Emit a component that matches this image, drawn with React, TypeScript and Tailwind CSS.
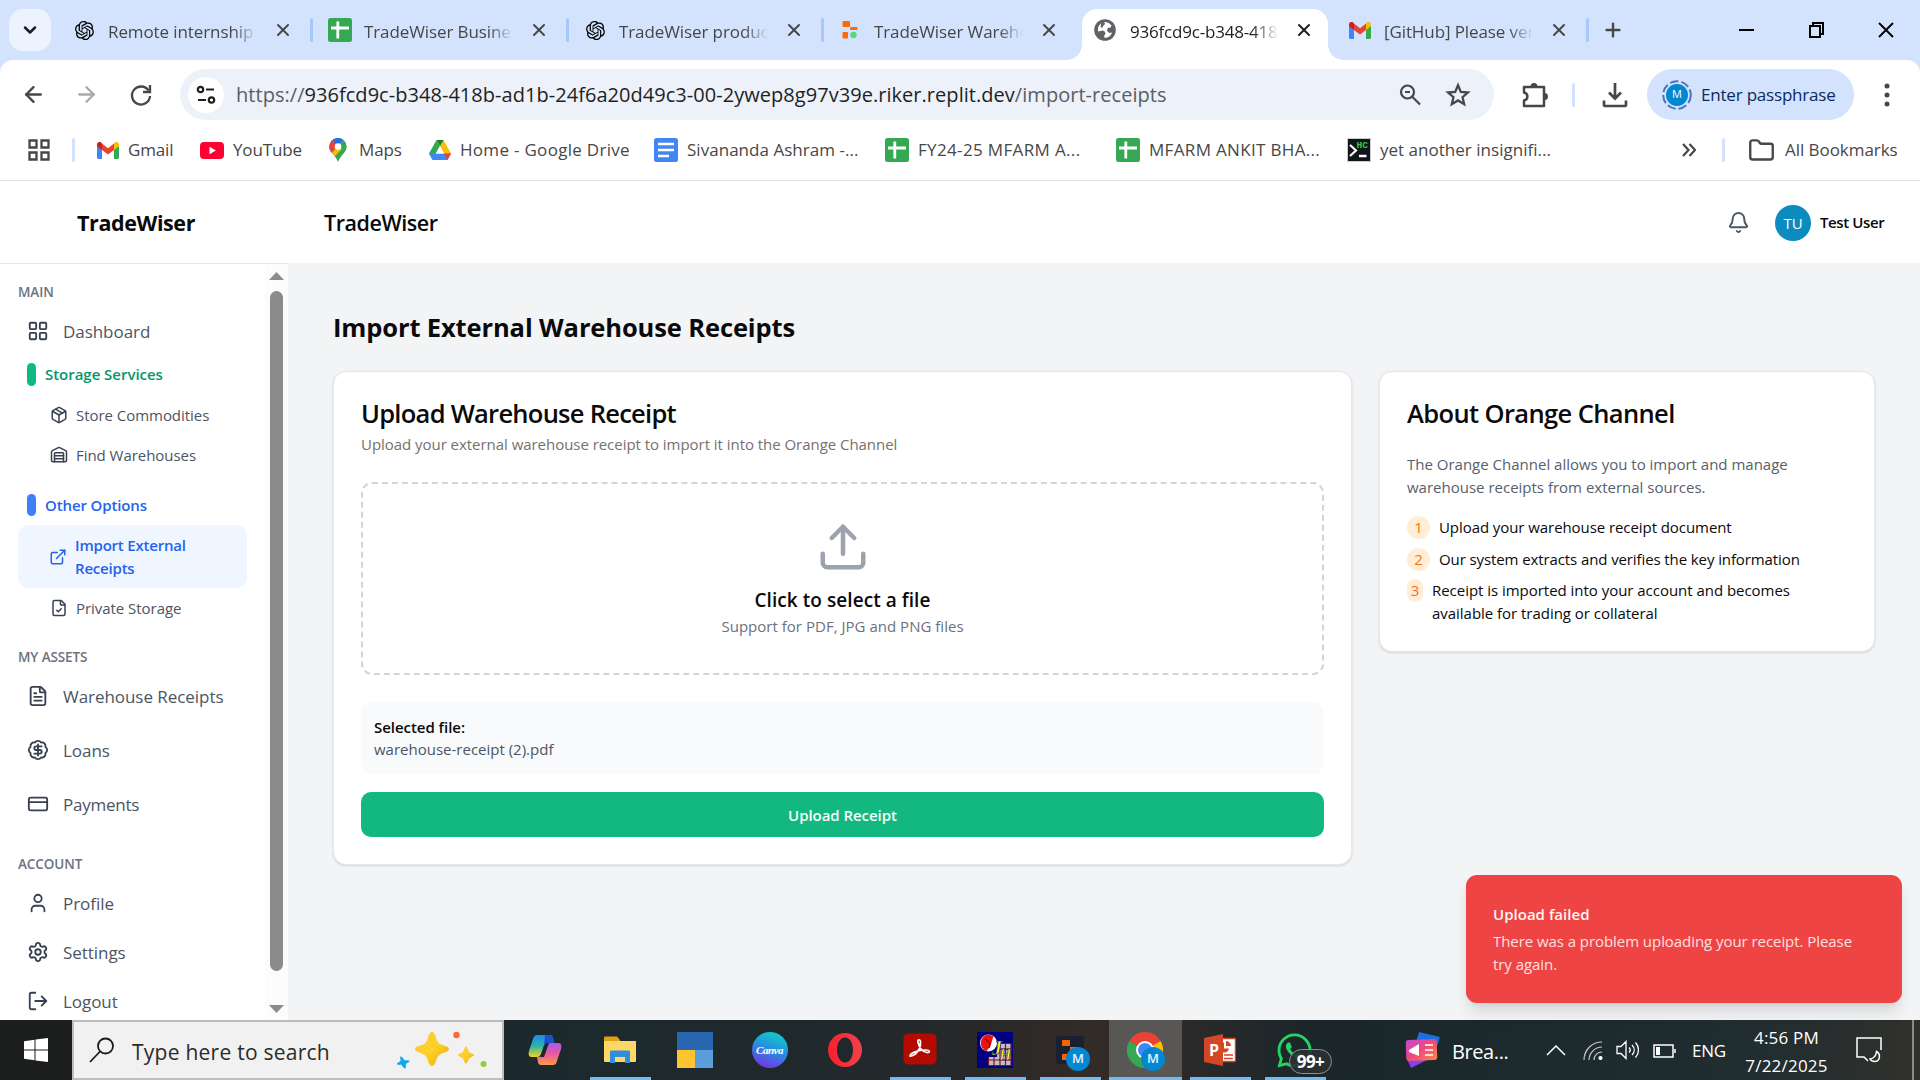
import React from "react";
import {
  ArrowLeft, ArrowRight, BadgeDollarSign, Bell, ChevronDown, CreditCard, ExternalLink, FileCheck, FileText,
  Folder, LayoutGrid, LogOut, Package, Plus, Settings, Upload, User, Warehouse, X,
} from "lucide-react";
import { RiOpenaiFill } from "react-icons/ri";
import { FaWhatsapp } from "react-icons/fa";

/* ---------- brand marks ---------- */

function SheetsIcon() {
  return (
    <svg width="24" height="24" viewBox="0 0 24 24">
      <rect width="24" height="24" rx="2.5" fill="#34a853" />
      <path d="M9.8 3.5v17M3 10h18" stroke="#fff" strokeWidth="2.8" />
    </svg>
  );
}

function DocsIcon() {
  return (
    <svg width="24" height="24" viewBox="0 0 24 24">
      <rect width="24" height="24" rx="2.5" fill="#4285f4" />
      <path d="M4 6h16M4 12h16M4 18h11" stroke="#fff" strokeWidth="2.4" />
    </svg>
  );
}

function GmailIcon() {
  return (
    <svg width="22" height="17" viewBox="0 0 22 17">
      <path d="M0 3v12.5C0 16.3.7 17 1.5 17H5V7.5z" fill="#4285f4" />
      <path d="M22 3v12.5c0 .8-.7 1.5-1.5 1.5H17V7.5z" fill="#34a853" />
      <path d="M17 1.6V8l5-3.800V2.500C22 .3 19.500-.9 17.800.5z" fill="#fbbc04" />
      <path d="M5 8V1.600l6 4.600 6-4.600V8l-6 4.600z" fill="#ea4335" />
      <path d="M0 2.500v1.700L5 8V1.600L4.200.5C2.500-.9 0 .3 0 2.500z" fill="#c5221f" />
    </svg>
  );
}

function YouTubeIcon() {
  return (
    <svg width="24" height="17" viewBox="0 0 24 17">
      <rect width="24" height="17" rx="4" fill="#ff0033" />
      <path d="M9.500 4.800v7.400l6.300-3.700z" fill="#fff" />
    </svg>
  );
}

function MapsIcon() {
  return (
    <svg width="18" height="24" viewBox="0 0 18 24">
      <defs>
        <clipPath id="pin">
          <path d="M9 0a8.700 8.700 0 0 0-8.700 8.700c0 3 1.500 4.700 3.400 7.100C5.700 18.300 7.700 20.500 9 24c1.300-3.500 3.300-5.700 5.300-8.200 1.900-2.400 3.400-4.100 3.400-7.100A8.700 8.700 0 0 0 9 0z" />
        </clipPath>
      </defs>
      <g clipPath="url(#pin)">
        <rect width="18" height="24" fill="#34a853" />
        <path d="M0 18L18 -2V-4H0z" fill="#4285f4" />
        <path d="M0 0h4l5 8-9 8z" fill="#ea4335" />
        <path d="M1 17L9 8l4 3-9 9z" fill="#fbbc04" />
        <path d="M3 1L9-1l5 2-6 7z" fill="#1a73e8" />
      </g>
      <circle cx="9" cy="8.600" r="3.300" fill="#fff" />
    </svg>
  );
}

function DriveIcon() {
  return (
    <svg width="22" height="20" viewBox="0 0 22 20">
      <path d="M7.500 0L0 13.500 3.700 19 11 6z" fill="#34a853" />
      <path d="M14.500 0L22 13.500h-7L7.500 0z" fill="#fbbc04" />
      <path d="M7.500 0L11 6l3.500-6z" fill="#188038" />
      <path d="M0 13.500h22L18.500 20h-15z" fill="#4285f4" />
      <path d="M15 13.500h7L18.500 20z" fill="#ea4335" />
      <path d="M11 6.200l-4.100 7.300h8.200z" fill="#fff" />
    </svg>
  );
}

function TerminalIcon() {
  return (
    <svg width="24" height="24" viewBox="0 0 24 24">
      <rect x=".5" y=".5" width="23" height="23" fill="#11161a" stroke="#c9ccd0" />
      <path d="M3 7l6 5.500L3 18" fill="none" stroke="#fff" strokeWidth="2.200" />
      <path d="M12 18h7.500" stroke="#fff" strokeWidth="2.500" />
      <text x="9.500" y="9.500" fontSize="9.500" fontFamily="Liberation Mono, monospace" fontWeight="700" fill="#2ecc40">HC</text>
    </svg>
  );
}

function ReplitMark() {
  return (
    <svg width="16" height="18" viewBox="0 0 16 18">
      <rect x=".5" width="7.500" height="6" rx="1" fill="#fa6a0a" />
      <rect x="8" y="6" width="7.500" height="3" rx=".8" fill="#fa6a0a" />
      <rect x=".5" y="11" width="5.500" height="6.500" rx="1" fill="#fa6a0a" />
      <circle cx="11.500" cy="14" r="3.200" fill="#5bd67a" />
    </svg>
  );
}

function GlobeIcon() {
  return (
    <svg width="22" height="22" viewBox="0 0 22 22">
      <circle cx="11" cy="11" r="10.800" fill="#5f6368" />
      <path d="M9 2.500c-2 .8-4 2-5 4.500L3 11h5.500l2 2v2.500l-1.700 1.200v2.800c4 .7 7.500-1 9.200-4.300h-3l-2-3 1.500-2.700h3.300L19 7.500C17 3.500 14 2.200 11.800 2.100c1.200 1.700.5 3.200-1.300 3.700-1.200.5-.8 1.800-2.200 2C6.500 8 7 4.500 9 2.500z" fill="#fff" transform="rotate(-12 11 11) translate(1.100 1.100) scale(.9)" />
    </svg>
  );
}

/* ---------- browser tabs ---------- */

type TabProps = { icon: React.ReactNode; title: string; active?: boolean; bar?: boolean };

function Tab({ icon, title, active, bar }: TabProps) {
  return (
    <div className={active ? "relative mt-[9px] h-[51px] w-[246px] shrink-0 rounded-t-[15px] bg-white" : "relative mt-[9px] h-[51px] w-[255px] shrink-0"}>
      <div className="flex h-[42px] items-center">
        <span className={active ? "ml-[11px] flex w-6 justify-center" : "ml-[15px] flex w-6 justify-center"}>{icon}</span>
        <span
          className={
            active
              ? "ml-[13px] mt-[3px] w-[149px] overflow-hidden whitespace-nowrap text-[17px] tracking-[-0.2px] text-[#1f1f1f] [mask-image:linear-gradient(to_right,black_82%,transparent)]"
              : "ml-[12px] mt-[3px] w-[149px] overflow-hidden whitespace-nowrap text-[17px] tracking-[-0.1px] text-[#474747] [mask-image:linear-gradient(to_right,black_84%,transparent)]"
          }
        >
          {title}
        </span>
        <X className={active ? "ml-[15px] text-[#1f1f1f]" : "ml-[16px] text-[#474747]"} size={20} strokeWidth={2.4} />
      </div>
      {bar && <span className="absolute right-[-1px] top-[9px] h-6 w-[3px] rounded bg-[#a8c7fa]" />}
      {active && (
        <>
          <span className="absolute -left-[15px] bottom-0 h-[15px] w-[15px] bg-[radial-gradient(circle_at_0_0,#d3e3fd_14.5px,#fff_15px)]" />
          <span className="absolute -right-[15px] bottom-0 h-[15px] w-[15px] bg-[radial-gradient(circle_at_100%_0,#d3e3fd_14.5px,#fff_15px)]" />
        </>
      )}
    </div>
  );
}

function TabStrip() {
  return (
    <div className="flex h-[60px] shrink-0 bg-[#d3e3fd]">
      <div className="ml-[9px] mt-[9px] flex h-[42px] w-[42px] shrink-0 items-center justify-center rounded-[14px] bg-[#ecf2fe]">
        <ChevronDown size={20} strokeWidth={3} className="text-[#1f1f1f]" />
      </div>
      <div className="ml-[6px] flex">
        <Tab icon={<RiOpenaiFill size={23} />} title="Remote internship" bar />
        <div className="ml-[1px] flex">
          <Tab icon={<SheetsIcon />} title="TradeWiser Business" bar />
          <Tab icon={<RiOpenaiFill size={23} />} title="TradeWiser product" bar />
          <Tab icon={<ReplitMark />} title="TradeWiser Warehouse" />
        </div>
      </div>
      <div className="ml-[4px] flex gap-[5px]">
        <Tab icon={<GlobeIcon />} title="936fcd9c-b348-418b" active />
        <Tab icon={<GmailIcon />} title="[GitHub] Please verify" bar />
      </div>
      <Plus className="ml-[14px] mt-[19px] text-[#474747]" size={22} strokeWidth={2.6} />
      <div className="ml-auto mr-[25px] mt-[18px] flex h-[24px] items-center gap-[52px] text-black">
        <svg width="18" height="18"><path d="M1 9h15" stroke="currentColor" strokeWidth="2" /></svg>
        <svg width="17" height="18" fill="none" stroke="currentColor" strokeWidth="2"><path d="M2 5h10v11H2zM5 5V2h10v11h-3" /></svg>
        <svg width="18" height="18" stroke="currentColor" strokeWidth="1.9"><path d="M2 2l14 14M16 2L2 16" /></svg>
      </div>
    </div>
  );
}

function Toolbar() {
  return (
    <div className="h-[60px] shrink-0 bg-[#d3e3fd]">
      <div className="flex h-[60px] items-center rounded-t-[13px] bg-white pt-[9px]">
        <ArrowLeft className="ml-[21px] text-[#474747]" size={25} strokeWidth={2.3} />
        <ArrowRight className="ml-[28px] text-[#a9a9a9]" size={25} strokeWidth={2.2} />
        <svg className="ml-[30px]" width="24" height="24" viewBox="0 0 24 24" fill="none" stroke="#474747" strokeWidth="2.3">
          <path d="M19.500 7.500A9 9 0 1 0 21 13" /><path d="M21 2v7h-7" />
        </svg>
        <div className="ml-[27px] flex h-[51px] w-[1314px] items-center rounded-full bg-[#ecf1fa]">
          <span className="ml-[8px] flex h-[36px] w-[36px] items-center justify-center rounded-full bg-white">
            <svg width="20" height="20" viewBox="0 0 20 20" fill="none" stroke="#1f1f1f" strokeWidth="2.2">
              <circle cx="4.500" cy="4.500" r="2.700" /><path d="M10 4.500h8M2 15h8" /><circle cx="15.500" cy="15" r="2.700" />
            </svg>
          </span>
          <span className="ml-[12px] w-[1162px] whitespace-nowrap text-[20px] tracking-[0.04px] text-[#5a5e63]">
            https://<span className="text-[#1f1f1f]">936fcd9c-b348-418b-ad1b-24f6a20d49c3-00-2ywep8g97v39e.riker.replit.dev</span>/import-receipts
          </span>
          <svg width="24" height="24" viewBox="0 0 24 24" fill="none" stroke="#474747" strokeWidth="2.2">
            <circle cx="9.500" cy="9" r="6.500" /><path d="M14 13.500l8 8M7 9h5" />
          </svg>
          <svg width="26" height="26" viewBox="0 0 24 24" fill="none" stroke="#474747" strokeWidth="2.1" className="ml-[23px]">
            <path d="M12 3l2.600 6.100 6.600.6-5 4.300 1.500 6.500-5.700-3.500-5.700 3.500L7.800 14l-5-4.300 6.600-.6z" />
          </svg>
        </div>
        <svg width="28" height="28" viewBox="0 0 28 28" className="ml-[26px]">
          <path d="M4 6h20v19H4v-5.500c4.500-1 4.500-7 0-8z" fill="none" stroke="#474747" strokeWidth="2.5" strokeLinejoin="round" />
          <path d="M10.500 5.500a3.500 3.500 0 0 1 7 0zM24.500 12a3.500 3.500 0 0 1 0 7z" fill="#474747" />
        </svg>
        <span className="ml-[24px] h-6 w-[3px] rounded bg-[#d3e3fd]" />
        <svg width="26" height="26" viewBox="0 0 26 26" fill="none" stroke="#474747" strokeWidth="2.7" className="ml-[27px]">
          <path d="M13 1v15M7 10.500l6 6 6-6M2 18.500v4c0 1 .5 1.500 1.500 1.500h19c1 0 1.500-.5 1.500-1.500v-4" />
        </svg>
        <div className="ml-[19px] flex h-[51px] w-[207px] items-center rounded-full bg-[#d3e3fd]">
          <span className="relative ml-[15px] flex h-[30px] w-[30px] items-center justify-center">
            <svg className="absolute inset-0" width="30" height="30"><circle cx="15" cy="15" r="13.800" fill="none" stroke="#4a76b8" strokeWidth="2" strokeDasharray="8.500 3" /></svg>
            <span className="flex h-[22px] w-[22px] items-center justify-center rounded-full bg-[#0288d1] text-[11px] text-white">M</span>
          </span>
          <span className="ml-[9px] whitespace-nowrap text-[17px] tracking-[-0.2px] text-[#0a2a5e]">Enter passphrase</span>
        </div>
        <svg width="6" height="28" className="ml-[30px]" fill="#474747"><circle cx="3" cy="5" r="2.500" /><circle cx="3" cy="14" r="2.500" /><circle cx="3" cy="23" r="2.500" /></svg>
      </div>
    </div>
  );
}

function Bookmark({ icon, label, box }: { icon: React.ReactNode; label: string; box: string }) {
  return (
    <div className={`flex shrink-0 items-center gap-[9px] whitespace-nowrap ${box}`}>
      {icon}
      <span>{label}</span>
    </div>
  );
}

function BookmarksBar() {
  return (
    <div className="flex h-[61px] shrink-0 items-center border-b border-[#dedede] bg-white text-[17px] tracking-[-0.15px] text-[#474747]">
      <svg width="22" height="22" viewBox="0 0 22 22" fill="none" stroke="#474747" strokeWidth="2.3" className="ml-[28px] shrink-0">
        <path d="M1.500 1.500h7v7h-7zM13.500 1.500h7v7h-7zM1.500 13.500h7v7h-7zM13.500 13.500h7v7h-7z" />
      </svg>
      <span className="ml-[22px] h-6 w-[3px] shrink-0 rounded bg-[#d3e3fd]" />
      <div className="ml-[22px] flex items-center">
        <Bookmark icon={<GmailIcon />} label="Gmail" box="w-[103px]" />
        <Bookmark icon={<YouTubeIcon />} label="YouTube" box="w-[129px]" />
        <Bookmark icon={<MapsIcon />} label="Maps" box="w-[100px] [&>span]:ml-[3px]" />
        <Bookmark icon={<DriveIcon />} label="Home - Google Drive" box="w-[225px] tracking-[0.3px]" />
        <Bookmark icon={<DocsIcon />} label="Sivananda Ashram -..." box="w-[231px] tracking-[0.03px]" />
        <Bookmark icon={<SheetsIcon />} label="FY24-25 MFARM A..." box="w-[231px] tracking-[0.35px]" />
        <Bookmark icon={<SheetsIcon />} label="MFARM ANKIT BHA..." box="w-[231px] tracking-[0.33px]" />
        <Bookmark icon={<TerminalIcon />} label="yet another insignifi..." box="w-[204px] tracking-[0.02px]" />
      </div>
      <svg width="14" height="14" className="ml-[131px] shrink-0" fill="none" stroke="#474747" strokeWidth="2.2"><path d="M1 1l5.500 6L1 13M7.500 1L13 7l-5.500 6" /></svg>
      <span className="ml-[26px] h-6 w-[3px] shrink-0 rounded bg-[#d3e3fd]" />
      <Folder className="ml-[23px] shrink-0" size={27} strokeWidth={2.1} />
      <span className="ml-[10px] whitespace-nowrap tracking-[-0.05px]">All Bookmarks</span>
    </div>
  );
}

/* ---------- application ---------- */

function SectionTitle({ children, box }: { children: string; box: string }) {
  return <div className={`flex h-7 items-center pl-[18px] text-[13.5px] font-semibold tracking-[-0.1px] text-[#6b7280] ${box}`}>{children}</div>;
}

function NavItem({ icon, label, box }: { icon: React.ReactNode; label: string; box: string }) {
  return (
    <div className={`flex items-center pl-[26px] text-[17px] tracking-[-0.05px] text-[#4b5563] ${box}`}>
      <span className="flex w-[23px] justify-center text-[#374151]">{icon}</span>
      <span className="ml-[14px] mt-[2px] whitespace-nowrap">{label}</span>
    </div>
  );
}

function SubItem({ icon, label, box }: { icon: React.ReactNode; label: string; box: string }) {
  return (
    <div className={`flex items-center pl-[50px] text-[15px] tracking-[-0.04px] text-[#4b5563] ${box}`}>
      <span className="flex w-[18px] justify-center text-[#374151]">{icon}</span>
      <span className="ml-[8px] mt-[1px] whitespace-nowrap">{label}</span>
    </div>
  );
}

function Sidebar() {
  return (
    <div className="flex w-[288px] shrink-0 border-t border-[#e5e7eb] bg-white">
      <div className="flex w-[265px] flex-col overflow-hidden pt-[14px] [&>*]:shrink-0">
        <SectionTitle box="">MAIN</SectionTitle>
        <NavItem icon={<LayoutGrid size={22} />} label="Dashboard" box="h-[50px]" />
        <div className="flex h-[37px] items-center pl-[27px] text-[15px] font-semibold tracking-[-0.03px] text-[#059669]">
          <span className="mr-[9px] h-[23px] w-[9px] rounded-full bg-[#10b981]" />Storage Services
        </div>
        <SubItem icon={<Package size={18} />} label="Store Commodities" box="mt-[1px] h-[41px]" />
        <SubItem icon={<Warehouse size={18} />} label="Find Warehouses" box="h-[40px]" />
        <div className="mt-[10px] flex h-[40px] items-center pl-[27px] text-[15px] font-semibold tracking-[-0.13px] text-[#2563eb]">
          <span className="mr-[9px] h-[22px] w-[9px] rounded-full bg-[#3b82f6]" />Other Options
        </div>
        <div className="ml-[18px] flex h-[63px] w-[229px] items-center rounded-[11px] bg-[#eff6ff] pl-[31px] text-[15px] font-semibold leading-[22.5px] tracking-[-0.2px] text-[#2563eb]">
          <ExternalLink size={18} />
          <span className="ml-[8px] w-[130px]">Import External Receipts</span>
        </div>
        <SubItem icon={<FileCheck size={18} />} label="Private Storage" box="h-[40px]" />
        <SectionTitle box="mt-[15px]">MY ASSETS</SectionTitle>
        <NavItem icon={<FileText size={22} />} label="Warehouse Receipts" box="h-[50px]" />
        <NavItem icon={<BadgeDollarSign size={22} />} label="Loans" box="mt-[4px] h-[50px]" />
        <NavItem icon={<CreditCard size={22} />} label="Payments" box="mt-[4px] h-[50px] tracking-[-0.25px]" />
        <SectionTitle box="mt-[21px]">ACCOUNT</SectionTitle>
        <NavItem icon={<User size={22} />} label="Profile" box="h-[50px]" />
        <NavItem icon={<Settings size={22} />} label="Settings" box="-mt-[1px] h-[49px]" />
        <NavItem icon={<LogOut size={22} />} label="Logout" box="h-[50px]" />
      </div>
      <div className="flex w-[23px] flex-col items-center bg-[#fcfcfc] pt-[8px]">
        <svg width="15" height="8" fill="#8b8b8b"><path d="M0 8L7.500 0 15 8z" /></svg>
        <span className="mt-[11px] h-[680px] w-[13px] rounded-full bg-[#8b8b8b]" />
        <svg width="15" height="8" fill="#8b8b8b" className="mt-[34px]"><path d="M0 0h15L7.500 8z" /></svg>
      </div>
    </div>
  );
}

function AppHeader() {
  return (
    <div className="flex h-[82px] shrink-0 items-center bg-white pt-[2px] text-[#0a0a0a]">
      <span className="ml-[77px] w-[247px] text-[21.500px] font-bold tracking-[-0.4px]">TradeWiser</span>
      <span className="text-[21.500px] font-semibold tracking-[-0.45px]">TradeWiser</span>
      <Bell className="mb-[1px] ml-auto text-[#4b5563]" size={23} strokeWidth={2} />
      <span className="ml-[25px] flex h-9 w-9 items-center justify-center rounded-full bg-[#0c8bbf] text-[15px] text-white">TU</span>
      <span className="mb-[1px] ml-[9px] mr-[36px] w-[64px] whitespace-nowrap text-[15px] font-semibold tracking-[-0.4px]">Test User</span>
    </div>
  );
}

function Toast() {
  return (
    <div className="absolute bottom-[17px] right-[18px] h-[128px] w-[436px] rounded-[11px] bg-[#ef4444] pl-[27px] pt-[28px] text-[15px] leading-[22.5px] shadow-[0_11px_17px_-3px_rgba(0,0,0,0.12),0_4px_7px_-4px_rgba(0,0,0,0.1)]">
      <div className="font-semibold tracking-[0.02px] text-[#fef5f5]">Upload failed</div>
      <div className="mt-[4px] w-[375px] leading-[23px] tracking-[-0.06px] text-[#fde0e0]">There was a problem uploading your receipt. Please try again.</div>
    </div>
  );
}

function Step({ n, children, badge, gap }: { n: number; children: string; badge: string; gap: string }) {
  return (
    <div className={`flex text-[15px] leading-[23px] text-[#0a0a0a] ${gap}`}>
      <span className={`mr-[9px] h-[23px] shrink-0 rounded-full bg-[#ffedd5] text-center text-[#f97316] ${badge}`}>{n}</span>
      <span>{children}</span>
    </div>
  );
}

function MainArea() {
  return (
    <div className="relative flex-1 bg-[#f3f4f6] pl-[45px] pt-[44px] text-[#0a0a0a]">
      <h1 className="h-[64px] text-[25.500px] font-bold leading-[40px] tracking-[-0.12px]">Import External Warehouse Receipts</h1>
      <div className="flex items-start gap-[27px]">
        <div className="h-[494px] w-[1019px] rounded-[13px] border border-[#e5e7eb] bg-white px-[27px] pt-[22px] shadow-sm">
          <h2 className="h-[38px] text-[25.5px] font-semibold leading-[38px] tracking-[-0.73px]">Upload Warehouse Receipt</h2>
          <p className="text-[15px] leading-[24px] tracking-[-0.04px] text-[#78716c]">Upload your external warehouse receipt to import it into the Orange Channel</p>
          <div className="mt-[26px] flex h-[193px] flex-col items-center rounded-[11px] border-2 border-dashed border-[#d1d5db] pt-[36px]">
            <Upload size={54} strokeWidth={2} className="ml-[1px] text-[#9ca3af]" />
            <p className="mt-[13px] text-[19px] font-semibold leading-[26px] tracking-[0.06px]">Click to select a file</p>
            <p className="text-[15px] leading-[26px] tracking-[0.02px] text-[#6b7280]">Support for PDF, JPG and PNG files</p>
          </div>
          <div className="mt-[27px] h-[72px] rounded-[11px] bg-[#f9fafb] pl-[13px] pt-[14px] text-[15px] leading-[22px]">
            <p className="font-semibold tracking-[-0.04px]">Selected file:</p>
            <p className="text-[#4b5563]">warehouse-receipt (2).pdf</p>
          </div>
          <div className="mt-[18px] flex h-[45px] items-center justify-center rounded-[10px] bg-[#12b880] pt-[2px] text-[15px] font-semibold tracking-[-0.05px] text-[#f5fffb]">Upload Receipt</div>
        </div>
        <div className="h-[281px] w-[496px] rounded-[13px] border border-[#e5e7eb] bg-white px-[27px] pt-[22px] shadow-sm">
          <h2 className="h-[38px] text-[25.5px] font-semibold leading-[38px] tracking-[-0.62px]">About Orange Channel</h2>
          <p className="mt-[21px] w-[400px] text-[15px] leading-[23px] text-[#57606c]">The Orange Channel allows you to import and manage warehouse receipts from external sources.</p>
          <Step n={1} badge="w-[23px]" gap="mt-[17px] tracking-[-0.07px]">Upload your warehouse receipt document</Step>
          <Step n={2} badge="w-[23px]" gap="mt-[9px] tracking-[-0.1px]">Our system extracts and verifies the key information</Step>
          <Step n={3} badge="w-[16px]" gap="mt-[8px] w-[400px] tracking-[-0.03px]">Receipt is imported into your account and becomes available for trading or collateral</Step>
        </div>
      </div>
      <Toast />
    </div>
  );
}

/* ---------- taskbar ---------- */

function ProfileBadge() {
  return <span className="absolute left-[34px] top-[27px] flex h-6 w-6 items-center justify-center rounded-full bg-[#0288d1] text-[13px] font-semibold text-[#e6f4ff]">M</span>;
}

function TaskIcon({ children, line, active }: { children: React.ReactNode; line?: boolean; active?: boolean }) {
  return (
    <div className={active ? "relative flex h-[60px] w-[75px] shrink-0 items-center justify-center bg-[linear-gradient(to_right,transparent_2px,#595755_2px,#595755_75px)]" : "relative flex h-[60px] w-[75px] shrink-0 items-center justify-center"}>
      {children}
      {line && <span className={active ? "absolute bottom-0 left-[2px] h-[3px] w-[73px] bg-[#76b9ed]" : "absolute bottom-0 left-[8px] h-[3px] w-[61px] bg-[#76b9ed]"} />}
    </div>
  );
}

function Sparkles() {
  return (
    <svg width="94" height="44" viewBox="0 0 94 44">
      <defs>
        <linearGradient id="gold" x1="0" y1="0" x2="1" y2="1"><stop offset="0" stopColor="#ffc83d" /><stop offset=".5" stopColor="#fcd12a" /><stop offset="1" stopColor="#f5a70a" /></linearGradient>
      </defs>
      <path d="M35 4c3 0 3.500 4.500 5 8.500 1 2 2 3 4 4 4 1.500 8 2 8 4.500s-4 3-8 5c-2 1-3 2-4 4-1.500 4-2 8-5 8s-3.500-4-5-8c-1-2-2-3-4-4-4-2-8-2.500-8-5s4-3 8-4.500c2-1 3-2 4-4 1.500-4 2-8.500 5-8.500z" fill="url(#gold)" />
      <path d="M69 18.500c1.500 0 2 4 3 5.500s5 1.500 5 3-4 2-5 3.500-1.500 5-3 5-2-3.500-3-5-5-2-5-3.500 4-1.500 5-3 1.500-5.500 3-5.500z" fill="url(#gold)" />
      <path d="M3.500 28.500c2-.5 3 3 4 3.500s4.500-.5 5 1-3 2-3.500 3 .5 4-1 4.500-2.500-3-3.500-3.500-4 .5-4.500-1 3-2 3.500-3-1-4 0-4.500z" fill="#0fa8f0" />
      <circle cx="59.500" cy="7" r="3.200" fill="#f96b2b" />
      <circle cx="86.500" cy="36" r="3" fill="#8ccf3f" />
    </svg>
  );
}

function Taskbar() {
  return (
    <div className="flex h-[60px] shrink-0 items-center overflow-hidden bg-[linear-gradient(to_right,#1b1e1d_0,#1b1e1d_72px,#1b292e_510px,#1f292c_800px,#27282a_960px,#332b27_1090px,#27292a_1220px,#1a262a_1320px,#1d2b2f_1600px,#222e2f_1780px,#32312d_1920px)] text-white">
      <div className="flex w-[72px] justify-center">
        <svg width="24" height="24" viewBox="0 0 24 24" fill="#fff"><path d="M0 3.300l10.500-1.500v9.700H0zM11.500 1.600L24 0v11.500H11.500zM0 12.500h10.500v9.700L0 20.800zM11.500 12.500H24V24l-12.500-1.600z" /></svg>
      </div>
      <div className="flex h-[60px] w-[432px] items-center border-2 border-[#bdbdbd] bg-[#f1f1f1] text-[#2b2b2b]">
        <svg width="26" height="26" viewBox="0 0 26 26" fill="none" stroke="#1b1b1b" strokeWidth="1.8" className="ml-[15px]"><circle cx="16.500" cy="9" r="7.500" /><path d="M11 14.500L1 25" /></svg>
        <span className="ml-[17px] mt-[5px] w-[265px] whitespace-nowrap text-[21px] tracking-[0.25px]">Type here to search</span>
        <Sparkles />
      </div>
      <div className="ml-[3px] flex">
        <TaskIcon>
          <svg width="34" height="32" viewBox="0 0 34 32">
            <defs>
              <linearGradient id="cpa" x1="0" y1="0" x2="0" y2="1"><stop offset="0" stopColor="#1c8af0" /><stop offset=".5" stopColor="#2bb3a8" /><stop offset="1" stopColor="#f4d21f" /></linearGradient>
              <linearGradient id="cpb" x1="0" y1="0" x2="0" y2="1"><stop offset="0" stopColor="#a958e8" /><stop offset=".5" stopColor="#ec5a9b" /><stop offset="1" stopColor="#fb9a4a" /></linearGradient>
            </defs>
            <path d="M9 1h13c3 0 3 3 4 8h-6c-3 0-4 2-5 5l-2 6c-1 2-2 3-4 3H4c-3 0-4-2-3-6L5 5c1-3 2-4 4-4z" fill="url(#cpa)" />
            <path d="M17 1h5c3 0 3 3 4 8h-6c-2 0-3 .5-4 3z" fill="#1b4fd0" />
            <path d="M25 31H13c-3 0-3-3-4-8 3 0 5-1 6-4l2-6c1-3 2-4 5-4h8c3 0 4 2 3 6l-4 12c-1 3-2 4-4 4z" fill="url(#cpb)" />
            <path d="M12 23l6-14h3l-5 14z" fill="#1e282c" />
          </svg>
        </TaskIcon>
        <TaskIcon line>
          <svg width="34" height="28" viewBox="0 0 34 28">
            <path d="M1 2c0-1 .5-1.500 1.500-1.500H14L17 4v5H1z" fill="#e0a010" /><path d="M1 5h32v19.500c0 1-.5 1.500-1.500 1.500h-29C1.500 26 1 25.500 1 24.500z" fill="#fed866" />
            <path d="M7 27V16c0-1 .5-1.500 1.500-1.500h17c1 0 1.500.5 1.500 1.500v11h-5v-6H12v6z" fill="#2f8fdc" />
          </svg>
          <span className="absolute bottom-0 left-[55px] h-[3px] w-[14px] bg-[#5a8cb2]" />
        </TaskIcon>
        <TaskIcon>
          <div className="grid h-9 w-9 grid-cols-2 grid-rows-2"><span className="col-span-2 bg-[#2b67b1]" /><span className="bg-[#ffc530]" /><span className="bg-[#5a9fdb]" /></div>
        </TaskIcon>
        <TaskIcon>
          <span className="flex h-9 w-9 items-center justify-center rounded-full bg-[linear-gradient(200deg,#12c3cc_15%,#2a8ae0_50%,#7d2ae8_95%)] font-[cursive] text-[11px] font-bold italic tracking-[-0.5px]">Canva</span>
        </TaskIcon>
        <TaskIcon>
          <svg width="36" height="36" viewBox="0 0 36 36"><defs><linearGradient id="op" x1="0" x2="1"><stop stopColor="#fa1e2e" /><stop offset="1" stopColor="#f0434a" /></linearGradient></defs><path fillRule="evenodd" fill="url(#op)" d="M18 1a17 17 0 1 0 0 34 17 17 0 1 0 0-34zm0 4.500c5 0 8 6 8 12.500s-3 12.500-8 12.500-8-6-8-12.500 3-12.500 8-12.500z" /></svg>
        </TaskIcon>
        <TaskIcon line>
          <svg width="34" height="32" viewBox="0 0 34 32" className="-mt-[3px]"><rect x=".5" y=".5" width="33" height="31" rx="5" fill="#b30b00" /><path d="M8 23c5-1 10-7 9.500-14 0-3-3.500-3-2.500.5 1.500 5.500 5 9.500 9 10 3.500.5 3-2.500-1-2.500-5 0-11 1-15 4-1.500 1.500-1 2.500 0 2z" fill="none" stroke="#fff" strokeWidth="1.7" /></svg>
        </TaskIcon>
        <TaskIcon line>
          <svg width="36" height="36" viewBox="0 0 36 36">
            <rect width="36" height="36" fill="#000080" /><path d="M11 25h9V11h14v23H11z" fill="#c0c0c0" />
            <path d="M11 28h23M11 33.500h23M11.500 25v9M17 25v9M23 11v23M28.500 11v23M34 11v23M20 11.500h14M20 17h14" stroke="#8a1020" strokeWidth="1.2" />
            <circle cx="11.500" cy="11" r="8.500" fill="#fff" /><path d="M11.500 2.500a8.500 8.500 0 0 0-2 16.500l4-5 3-10z" fill="#f01010" /><path d="M8 7l5 4-1 5" stroke="#500" fill="none" />
            <text x="15" y="23" fontSize="20" fontStyle="italic" fontWeight="700" fontFamily="Liberation Serif, serif" fill="#ffff20" stroke="#000080" strokeWidth=".6">J</text>
            <text x="22" y="28" fontSize="16" fontStyle="italic" fontWeight="700" fontFamily="Liberation Serif, serif" fill="#ffff20" stroke="#000080" strokeWidth=".6">H</text>
          </svg>
        </TaskIcon>
        <TaskIcon line>
          <svg width="28" height="28" viewBox="0 0 28 28"><rect width="28" height="28" rx="3" fill="#1a2030" /><path d="M6 4h8v6H6zM14 11h8v5h-8zM6 18h8v6H6z" fill="#f26207" /></svg>
          <ProfileBadge />
        </TaskIcon>
        <TaskIcon line active>
          <svg width="36" height="36" viewBox="0 0 36 36">
            <path d="M18 18L2.400 9A18 18 0 0 1 33.600 9z" fill="#ea4335" /><path d="M18 18L33.600 9A18 18 0 0 1 18 36z" fill="#fbbc04" /><path d="M18 18v18A18 18 0 0 1 2.400 9z" fill="#34a853" />
            <circle cx="18" cy="18" r="9" fill="#fff" /><circle cx="18" cy="18" r="7" fill="#4285f4" />
          </svg>
          <ProfileBadge />
        </TaskIcon>
        <TaskIcon line>
          <svg width="32" height="32" viewBox="0 0 32 32"><rect x="16" y="4.500" width="15.500" height="23" rx="1" fill="#fff" stroke="#d24726" strokeWidth="1.500" /><path d="M20 8.500a5 5 0 1 0 5 6h-5zM22 7v5h5a5 5 0 0 0-5-5z" fill="#d24726" /><path d="M20 21h9M20 24.500h9" stroke="#d24726" strokeWidth="1.600" /><path d="M0 4l19-4v32L0 28z" fill="#d24726" /><text x="5" y="22" fontSize="16" fontWeight="700" fontFamily="Open Sans, sans-serif" fill="#fff">P</text></svg>
        </TaskIcon>
        <TaskIcon line>
          <FaWhatsapp size={39} color="#25d366" />
          <span className="absolute left-[32px] top-[29px] flex h-[25px] w-[43px] items-center justify-center rounded-full border border-[#8c9092] bg-[#2b3032]/90 text-[17px] font-bold tracking-[-0.5px]">99+</span>
        </TaskIcon>
      </div>
      <svg width="38" height="36" viewBox="0 0 38 36" className="ml-[71px] shrink-0">
        <path d="M16 0l21 5-5 16-20-8z" fill="#1b6fe0" /><path d="M4 27l26-2-22 11z" fill="#8a3ff0" />
        <defs><linearGradient id="nw" x1="0" y1="0" x2="1" y2="1"><stop offset="0" stopColor="#c149d8" /><stop offset=".5" stopColor="#f0487e" /><stop offset="1" stopColor="#fb8a40" /></linearGradient></defs>
        <rect x="3" y="7.500" width="31" height="21" rx="3" fill="url(#nw)" transform="rotate(-2 18 18)" />
        <path d="M6 18l10-6v12l-10-4zM9 21l3 4" fill="#fff" /><path d="M22 13h8M22 18h8M22 23h8" stroke="#ffd9cf" strokeWidth="2" />
      </svg>
      <span className="ml-[11px] mt-[3px] w-[72px] shrink-0 whitespace-nowrap text-[20px] tracking-[-0.4px]">Brea...</span>
      <svg width="20" height="11" className="ml-[22px] shrink-0" fill="none" stroke="#fff" strokeWidth="1.5"><path d="M1 10l9-9 9 9" /></svg>
      <svg width="20" height="20" viewBox="0 0 20 20" className="ml-[17px] mt-[2px] shrink-0" fill="none" stroke="#fff" strokeWidth="1.2"><path d="M1 19C1 9 9 1 19 1M6 19C6 12 12 6 19 6M11 19c0-5 4-8 8-8" opacity=".75" /><circle cx="17.500" cy="17" r="1.500" fill="#fff" /></svg>
      <svg width="24" height="20" viewBox="0 0 24 20" className="ml-[13px] shrink-0" fill="none" stroke="#fff" strokeWidth="1.3"><path d="M1 6.500h4l5-5v17l-5-5H1zM13 7.500c1.500 1.500 1.500 3.500 0 5M16 5c3 3 3 7 0 10M19.500 2.500c4 4.500 4 10.500 0 15" /></svg>
      <svg width="23" height="14" className="ml-[13px] mt-[1px] shrink-0" fill="none" stroke="#fff" strokeWidth="1.5"><path d="M1 1h19v12H1z" /><path d="M3 3h4v8H3z" fill="#fff" stroke="none" /><path d="M22 5v4" /></svg>
      <span className="ml-[16px] mt-[2px] w-[34px] shrink-0 text-[17px] tracking-[-0.3px]">ENG</span>
      <div className="ml-[9px] mt-[3px] w-[103px] shrink-0 whitespace-nowrap text-center text-[17px] leading-[28px] tracking-[0.2px]"><div>4:56 PM</div><div>7/22/2025</div></div>
      <svg width="26" height="26" viewBox="0 0 26 26" className="ml-[18px] shrink-0" fill="none" stroke="#fff" strokeWidth="1.5"><path d="M12 24l-4-4H1V1h24v12" /><path d="M14 22c4-.5 6-3 6.500-7.500 5 3 3 10-1.500 10-2 0-4-.5-5-2.500z" /></svg>
      <span className="ml-auto mr-[6px] h-[60px] w-[2px] shrink-0 bg-[#8a8c8b]" />
    </div>
  );
}

export default function App() {
  return (
    <div className="flex h-[1080px] w-[1920px] flex-col overflow-hidden font-['Open_Sans',sans-serif]">
      <TabStrip />
      <Toolbar />
      <BookmarksBar />
      <AppHeader />
      <div className="flex min-h-0 flex-1">
        <Sidebar />
        <MainArea />
      </div>
      <Taskbar />
    </div>
  );
}
